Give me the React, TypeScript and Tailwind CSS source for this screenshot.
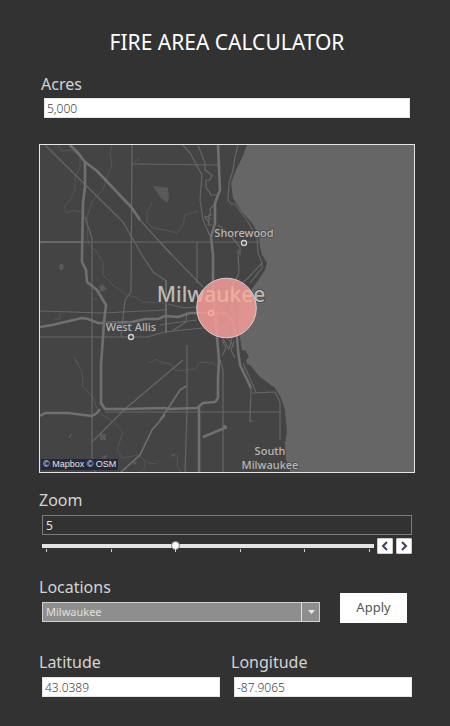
import { useState } from "react";
import type { ReactNode } from "react";

const highways = [
  "M70 145L78 153L85 162L97 171L132 208L140 220",
  "M85 162V187L83 203L82 255V262L86 270L87 282L97 290L106 305L104 323L101 365V403L105 409H125L165 408L168 409L197 408L203 403L215 402L218 398V380L219 360L217 337L215 312",
  "M40 416L45 413H68L92 416L97 413L100 409",
  "M40 327L52 325L82 318L88 319L98 323L132 322L145 319H158L165 316L178 317L190 313H225",
  "M218 145L220 190L215 203V223L211 237L213 255V280L214 312",
  "M199 406V472",
  "M203 437L227 427M224 425L226 429",
  "M225 312L233 322L237 337L238 350L240 365L251 388",
];

const arterials = [
  "M140 220L167 250L203 287",
  "M45 145L123 222L142 255L153 272L165 280",
  "M132 145L131 292L125 300L121 337",
  "M132 164L218 165",
  "M40 242H260",
  "M85 217L92 238V457L95 472",
  "M40 311L102 313L165 310",
  "M40 337H147L165 332L203 328",
  "M183 360L125 409L92 442",
  "M187 345V410L185 472",
  "M220 360L223 370V472",
  "M105 412H281",
  "M252 393L275 392L280 402V440",
  "M243 363L256 392",
  "M251 388L250 421H253",
  "M183 145L190 153L202 175L200 200L203 220L212 240",
  "M198 145L201 153L205 163V170L212 175L210 180H206V187L211 195H218",
  "M238 145L235 157L233 170L229 183L228 200L231 204H235L248 222L257 237L258 253L262 263L248 278L232 292",
  "M238 250L239 273L232 287",
  "M218 225L227 232L240 247V255",
  "M197 242V283M160 242L172 255",
  "M216 203L210 209L211 215L205 218L209 222L208 225H212M209 214V221M204 216L212 219",
  "M262 263V268L250 283",
  "M168 304L184 308L196 307M160 325L180 322L197 320M172 331L186 322L187 312",
  "M218 312V325L227 337L234 347M222 337L229 349L232 338",
  "M221 325L228 332M230 305L235 320L233 338",
  "M205 300L221 306L226 318M210 320L216 312L229 299",
  "M222 340L226 348L222 356M234 341L231 350L235 358",
];

const creeks = [
  "M58 145L62 151L72 150L80 157V167L75 177V190L70 200L64 207L67 213L73 210L80 212",
  "M112 145L110 153L112 165L107 177L103 190L92 202L87 217L88 243L98 253",
  "M152 203L147 212V222L153 228L165 230L177 233L183 225L185 215L198 211",
  "M95 250L103 262V275L115 287L127 295L135 297L142 302L165 303",
  "M75 360L82 372L83 387L93 397L98 412L115 423L123 432L117 450L122 458L138 455L148 463L157 464M144 460L145 468L140 472",
  "M160 361L172 365L176 371L196 369L199 362L213 363L217 367",
  "M73 356L79 364M149 363L156 359L163 365M134 162L140 158M40 245L44 243",
  "M57 319H60V314L58 313M53 319H58M92 299H97M178 453L177 464L180 472",
];

function MapView() {
  return (
    <svg
      viewBox="40 145 374 327"
      preserveAspectRatio="xMidYMid slice"
      role="img"
      aria-label="Map of the Milwaukee area with the fire extent"
      className="block h-[327px] w-full bg-[#666666] font-['Noto_Sans',sans-serif]"
    >
      <path
        fill="#444444"
        d="M40 145H247L242 158L236 170L231 183L233 198L242 212L252 223L259 235L260 247L262 255L267 263L265 270L257 282L249 293L240 305L238 320L240 338L242 350L246 351L249 357L246 360L247 364L250 365L260 377L275 388L281 398L285 410L287 432L285 443L286 460L290 472H40Z"
      />
      <g fill="#595959">
        <path d="M153 186L164 187L168 188L169 198L167 203L160 197Z" />
        <path d="M61 263L64 266L63 270H60L59 266Z" />
        <path d="M99 287L102 284L107 289L101 292Z" />
        <path d="M100 434H106V440H100Z" />
        <path d="M69 436L72 433L71 437L69 438ZM102 457L108 454L106 458L102 459ZM133 462L137 461L136 464L133 465ZM171 455L176 453L174 457Z" />
      </g>
      <g fill="none" stroke="#565656" strokeWidth="1">
        {creeks.map((d) => <path key={d} d={d} />)}
      </g>
      <g fill="none" stroke="#666666" strokeWidth="1.2" strokeLinejoin="round">
        {arterials.map((d) => <path key={d} d={d} />)}
      </g>
      <g fill="none" stroke="#707070" strokeWidth="2.6" strokeLinejoin="round">
        {highways.map((d) => <path key={d} d={d} />)}
        <path strokeWidth="1.6" d="M165 415L152 430L140 455L121 472M160 420L167 410L180 390L186 386M166 280V333M40 242H83" />
      </g>
      <g fill="#b8b6b4" stroke="#444444" strokeWidth="2" strokeOpacity="0.7" paintOrder="stroke" fontSize="11" fontWeight="500" textAnchor="middle">
        <text x="244" y="237">Shorewood</text>
        <text x="131" y="331">West Allis</text>
        <text x="270" y="455">South</text>
        <text x="270" y="469">Milwaukee</text>
        <text x="211" y="302" fontSize="21" fill="#bcbab8">Milwaukee</text>
      </g>
      <g fill="#444444" stroke="#d0cecc" strokeWidth="1.4">
        <circle cx="244" cy="243" r="2.5" />
        <circle cx="131" cy="337" r="2.5" />
        <circle cx="211" cy="313" r="2.5" />
      </g>
      <circle cx="226.5" cy="308" r="29.8" fill="#f09b97" fillOpacity="0.88" stroke="#d8cfcd" strokeWidth="1" />
      <text x="211" y="302" fontSize="21" fontWeight="500" textAnchor="middle" fill="#f0b89c" fillOpacity="0.6" clipPath="url(#fire-extent)" aria-hidden="true">Milwaukee</text>
      <circle cx="211" cy="313" r="2.5" fill="none" stroke="#f0b89c" strokeWidth="1" />
      <clipPath id="fire-extent">
        <circle cx="226.5" cy="308" r="29" />
      </clipPath>
    </svg>
  );
}

function Label({ htmlFor, children }: { htmlFor: string; children: ReactNode }) {
  return (
    <label htmlFor={htmlFor} className="block text-base leading-6 text-[#d4d4d4]">
      {children}
    </label>
  );
}

const whiteBox =
  "block h-5 border border-[#e6e6e6] bg-white px-[2px] text-xs font-light text-[#444444] outline-none";

const stepButton =
  "flex size-4 items-center justify-center rounded-[1px] border border-[#d0cccc] bg-white text-[#3c4164]";

export default function App() {
  const [acres, setAcres] = useState("5,000");
  const [zoom, setZoom] = useState(5);
  const [place, setPlace] = useState("Milwaukee");
  const [latitude, setLatitude] = useState("43.0389");
  const [longitude, setLongitude] = useState("-87.9065");
  const changeZoom = (value: number) => setZoom(Math.min(11, Math.max(1, value || 1)));

  return (
    <main className="min-h-screen bg-[#323232] pt-[27px] pr-[35px] pb-7 pl-[39px] font-['Noto_Sans',sans-serif]">
      <h1 className="text-center text-[21px] leading-[30px] text-white">FIRE AREA CALCULATOR</h1>

      <div className="mt-[15px] pr-[5px] pl-[2px]">
        <Label htmlFor="acres">Acres</Label>
        <div className="mt-[2px] pl-[3px]">
          <input id="acres" className={`${whiteBox} w-full`} value={acres} onChange={(e) => setAcres(e.target.value)} />
        </div>
      </div>

      <div className="relative mt-[26px] border border-[#e6e6e6]">
        <MapView />
        <p className="absolute bottom-[2px] left-[1px] bg-[#23293a] px-[2px] font-['Liberation_Sans',sans-serif] text-[9px] leading-[11px] text-[#e4e4e4]">
          © Mapbox © OSM
        </p>
      </div>

      <div className="mt-[15px] pr-[3px]">
        <Label htmlFor="zoom">Zoom</Label>
        <div className="mt-[3px] pl-[3px]">
          <input
            id="zoom"
            className="block h-5 w-full border border-[#7c7c7c] bg-transparent px-[3px] text-xs text-[#e4e4e4] outline-none"
            value={zoom}
            onChange={(e) => changeZoom(Number(e.target.value))}
          />
          <div className="mt-[3px] flex gap-[3px]">
            <div className="flex-1 pt-[3px]">
              <input
                type="range"
                aria-label="Zoom level"
                min={1}
                max={11}
                value={zoom}
                onChange={(e) => changeZoom(Number(e.target.value))}
                className="block h-[10px] w-full appearance-none bg-transparent [&::-webkit-slider-runnable-track]:h-1 [&::-webkit-slider-runnable-track]:bg-[#e4e4e2] [&::-webkit-slider-thumb]:-mt-[3px] [&::-webkit-slider-thumb]:size-[9px] [&::-webkit-slider-thumb]:appearance-none [&::-webkit-slider-thumb]:rounded-full [&::-webkit-slider-thumb]:border [&::-webkit-slider-thumb]:border-[#777777] [&::-webkit-slider-thumb]:bg-white"
              />
              <div className="-mt-[2px] flex justify-between px-1">
                {[1, 3, 5, 7, 9, 11].map((tick) => (
                  <span key={tick} className="h-[3px] w-px bg-[#d0d0d0]" />
                ))}
              </div>
            </div>
            <button type="button" aria-label="Zoom out" className={stepButton} onClick={() => changeZoom(zoom - 1)}>
              <svg viewBox="0 0 10 10" className="size-[10px]" fill="none" stroke="currentColor" strokeWidth="2">
                <path d="M7 1L3 5L7 9" />
              </svg>
            </button>
            <button type="button" aria-label="Zoom in" className={stepButton} onClick={() => changeZoom(zoom + 1)}>
              <svg viewBox="0 0 10 10" className="size-[10px]" fill="none" stroke="currentColor" strokeWidth="2">
                <path d="M3 1L7 5L3 9" />
              </svg>
            </button>
          </div>
        </div>
      </div>

      <div className="mt-[21px] flex items-end gap-5 pr-2">
        <div className="flex-1 pb-px">
          <Label htmlFor="location">Locations</Label>
          <div className="relative mt-[3px] ml-[3px]">
            <select
              id="location"
              className="block h-5 w-full appearance-none border border-[#d0d0d0] bg-[#8e8e8e] px-[3px] text-[11px] text-[#e0e0de] outline-none"
              value={place}
              onChange={(e) => setPlace(e.target.value)}
            >
              <option>Milwaukee</option>
            </select>
            <span className="pointer-events-none absolute inset-y-0 right-0 flex w-[19px] items-center justify-center border-l border-[#e0e0e0]">
              <svg viewBox="0 0 7 4" className="h-1 w-[7px]">
                <path d="M0 0H7L3.500 4Z" fill="#e8e8e8" />
              </svg>
            </span>
          </div>
        </div>
        <button type="button" className="h-[30px] w-[67px] bg-white text-[13px] text-[#555555]">
          Apply
        </button>
      </div>

      <div className="mt-[27px] grid grid-cols-2 gap-[11px] pr-[3px]">
        <div>
          <Label htmlFor="latitude">Latitude</Label>
          <div className="mt-[3px] pl-[3px]">
            <input id="latitude" className={`${whiteBox} w-full`} value={latitude} onChange={(e) => setLatitude(e.target.value)} />
          </div>
        </div>
        <div>
          <Label htmlFor="longitude">Longitude</Label>
          <div className="mt-[3px] pl-[3px]">
            <input id="longitude" className={`${whiteBox} w-full`} value={longitude} onChange={(e) => setLongitude(e.target.value)} />
          </div>
        </div>
      </div>
    </main>
  );
}
